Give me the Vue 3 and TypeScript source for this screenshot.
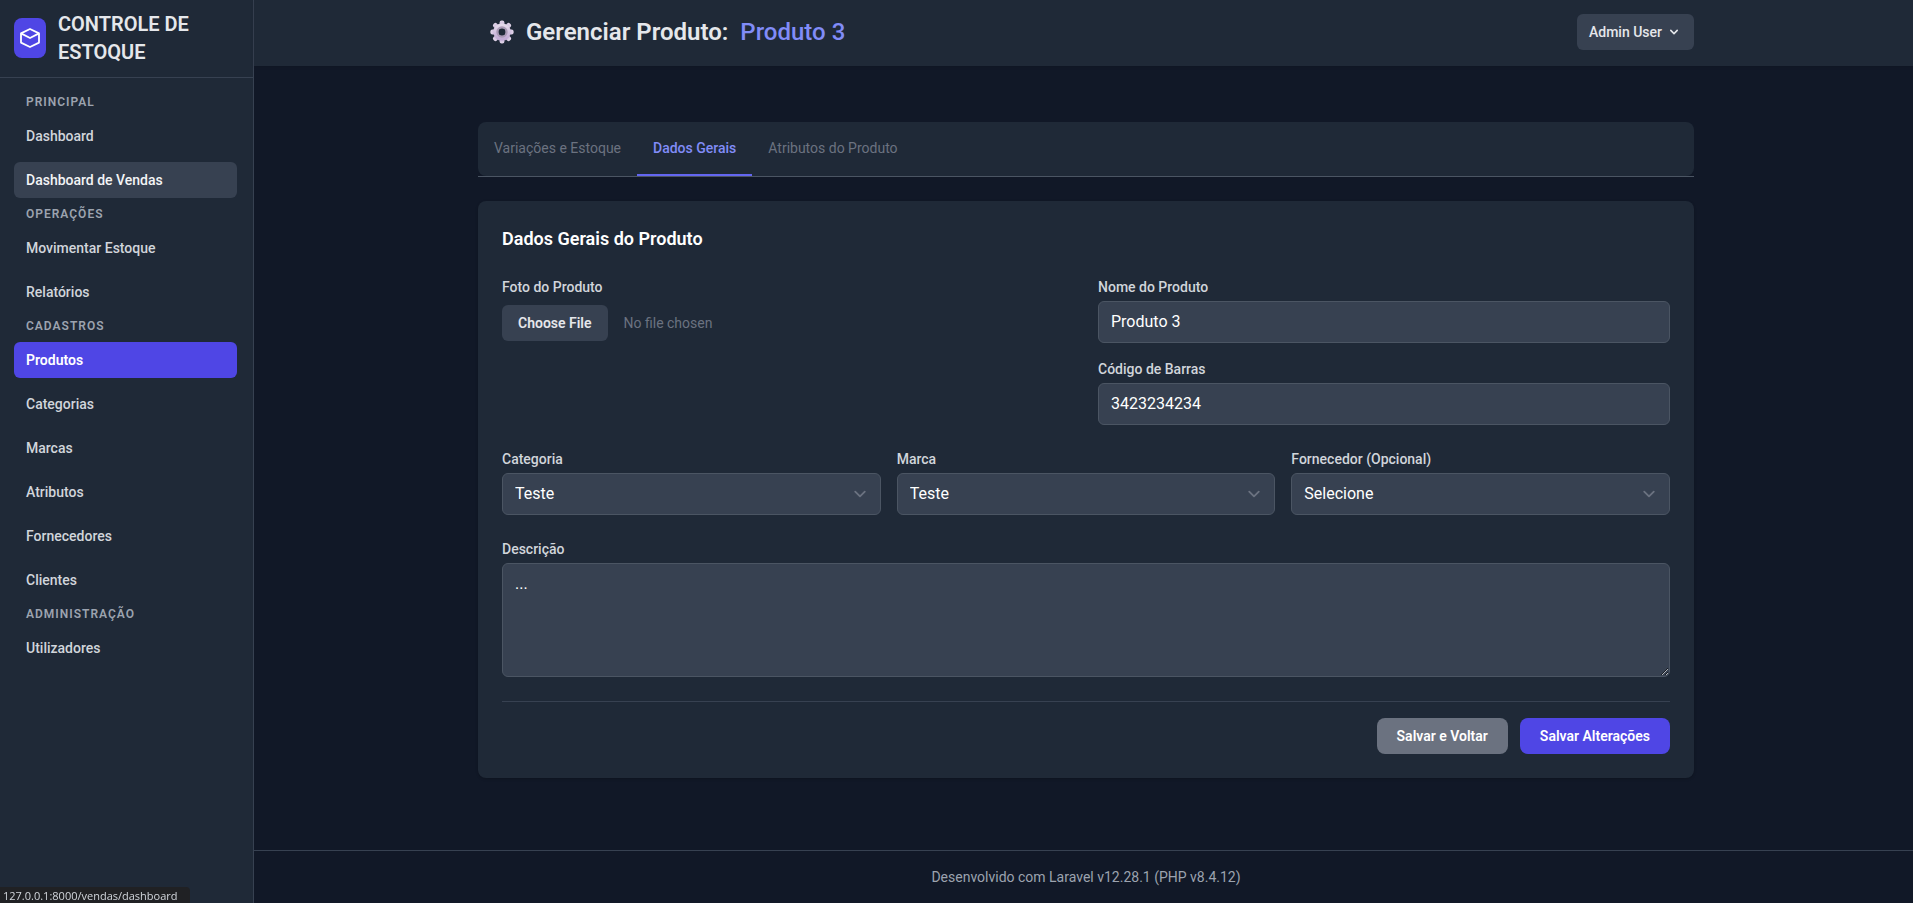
<script setup lang="ts">
import { ref } from 'vue'

interface NavItem { label: string; state?: 'active' | 'hover' }
interface NavSection { title: string; items: NavItem[] }

const sections: NavSection[] = [
  { title: 'Principal', items: [{ label: 'Dashboard' }, { label: 'Dashboard de Vendas', state: 'hover' }] },
  { title: 'Operações', items: [{ label: 'Movimentar Estoque' }, { label: 'Relatórios' }] },
  {
    title: 'Cadastros',
    items: [
      { label: 'Produtos', state: 'active' },
      { label: 'Categorias' },
      { label: 'Marcas' },
      { label: 'Atributos' },
      { label: 'Fornecedores' },
      { label: 'Clientes' },
    ],
  },
  { title: 'Administração', items: [{ label: 'Utilizadores' }] },
]

const tabs = ['Variações e Estoque', 'Dados Gerais', 'Atributos do Produto']
const activeTab = ref('Dados Gerais')

const nome = ref('Produto 3')
const codigo = ref('3423234234')
const categoria = ref('Teste')
const marca = ref('Teste')
const fornecedor = ref('Selecione')
const descricao = ref('...')

const teeth = [0, 45, 90, 135, 180, 225, 270, 315]
</script>

<template>
  <div class="layout">
    <aside class="sidebar">
      <a class="brand" href="#">
        <span class="brand-logo">
          <svg viewBox="0 0 20 20" width="20" height="20" fill="none" stroke="currentColor" stroke-width="1.8" stroke-linejoin="round" aria-hidden="true">
            <path d="M10 1L19 5.4V14.6L10 19L1 14.6V5.4Z" />
            <path d="M1 5.4L10 10L19 5.4" />
          </svg>
        </span>
        <span class="brand-name">Controle de Estoque</span>
      </a>
      <nav class="nav">
        <section v-for="section in sections" :key="section.title" class="nav-section">
          <h2 class="nav-title">{{ section.title }}</h2>
          <ul class="nav-list">
            <li v-for="item in section.items" :key="item.label">
              <a href="#" class="nav-link" :class="item.state">{{ item.label }}</a>
            </li>
          </ul>
        </section>
      </nav>
    </aside>

    <div class="page">
      <header class="topbar">
        <div class="container topbar-row">
          <h1 class="title">
            <svg viewBox="0 0 24 24" width="24" height="24" aria-hidden="true">
              <defs>
                <linearGradient id="gearFill" x1="0" y1="0" x2="0" y2="1">
                  <stop offset="0" stop-color="#e3d8ea" />
                  <stop offset="1" stop-color="#c3acd6" />
                </linearGradient>
              </defs>
              <g fill="url(#gearFill)">
                <rect v-for="angle in teeth" :key="angle" x="9.6" y="0.4" width="4.8" height="6" rx="2" :transform="`rotate(${angle} 12 12)`" />
              </g>
              <circle cx="12" cy="12" r="6.2" fill="none" stroke="url(#gearFill)" stroke-width="5" />
              <circle cx="12" cy="12" r="4.7" fill="none" stroke="#a999b5" stroke-width="2" />
            </svg>
            <span>Gerenciar Produto:</span>
            <span class="accent">Produto 3</span>
          </h1>
          <button type="button" class="user-button">
            Admin User
            <svg viewBox="0 0 20 20" width="16" height="16" fill="currentColor" aria-hidden="true">
              <path fill-rule="evenodd" clip-rule="evenodd" d="M5.293 7.293a1 1 0 011.414 0L10 10.586l3.293-3.293a1 1 0 111.414 1.414l-4 4a1 1 0 01-1.414 0l-4-4a1 1 0 010-1.414z" />
            </svg>
          </button>
        </div>
      </header>

      <main class="container content">
        <div class="tabs-wrap">
          <nav class="tabs">
            <button
              v-for="tab in tabs"
              :key="tab"
              type="button"
              class="tab"
              :class="{ current: tab === activeTab }"
              @click="activeTab = tab"
            >{{ tab }}</button>
          </nav>
        </div>

        <form class="card" @submit.prevent>
          <h3 class="card-title">Dados Gerais do Produto</h3>

          <div class="row two">
            <div class="field file-field">
              <label for="foto">Foto do Produto</label>
              <input id="foto" type="file" class="file" />
            </div>
            <div class="stack">
              <div class="field">
                <label for="nome">Nome do Produto</label>
                <input id="nome" v-model="nome" type="text" class="control" />
              </div>
              <div class="field">
                <label for="codigo">Código de Barras</label>
                <input id="codigo" v-model="codigo" type="text" class="control" />
              </div>
            </div>
          </div>

          <div class="row three">
            <div class="field">
              <label for="categoria">Categoria</label>
              <select id="categoria" v-model="categoria" class="control select"><option>Teste</option></select>
            </div>
            <div class="field">
              <label for="marca">Marca</label>
              <select id="marca" v-model="marca" class="control select"><option>Teste</option></select>
            </div>
            <div class="field">
              <label for="fornecedor">Fornecedor (Opcional)</label>
              <select id="fornecedor" v-model="fornecedor" class="control select"><option>Selecione</option></select>
            </div>
          </div>

          <div class="row field">
            <label for="descricao">Descrição</label>
            <textarea id="descricao" v-model="descricao" rows="4" class="control area"></textarea>
          </div>

          <div class="actions">
            <button type="submit" class="btn secondary">Salvar e Voltar</button>
            <button type="submit" class="btn primary">Salvar Alterações</button>
          </div>
        </form>
      </main>

      <footer class="footer">
        <p class="container footer-text">Desenvolvido com Laravel v12.28.1 (PHP v8.4.12)</p>
      </footer>
    </div>

    <div class="status">127.0.0.1:8000/vendas/dashboard</div>
  </div>
</template>

<style>
body {
  background: #111827;
}
</style>

<style scoped>
.layout,
.layout * {
  box-sizing: border-box;
}
.layout {
  display: flex;
  min-height: 100vh;
  background: #111827;
  color: #d1d5db;
  font-family: Roboto, "Liberation Sans", sans-serif;
  font-size: 14px;
  line-height: 20px;
}
h1, h2, h3, p, ul {
  margin: 0;
  padding: 0;
}
button, input, select, textarea {
  font-family: inherit;
}

.sidebar {
  flex: 0 0 254px;
  background: #1f2937;
  border-right: 1px solid #374151;
}
.brand {
  display: flex;
  align-items: center;
  gap: 12px;
  padding: 10px 14px 11px;
  border-bottom: 1px solid #374151;
  color: #e5e7eb;
  text-decoration: none;
}
.brand-logo {
  display: flex;
  align-items: center;
  justify-content: center;
  width: 32px;
  height: 40px;
  flex: none;
  border-radius: 8px;
  background: #4f46e5;
  color: #fff;
}
.brand-name {
  max-width: 160px;
  font-size: 20px;
  font-weight: 600;
  line-height: 28px;
  text-transform: uppercase;
}
.nav {
  display: flex;
  flex-direction: column;
  gap: 8px;
  padding: 16px 16px 16px 14px;
}
.nav-title {
  margin-bottom: 8px;
  padding: 0 12px;
  color: #9ca3af;
  font-size: 12px;
  font-weight: 600;
  line-height: 16px;
  letter-spacing: 1px;
  text-transform: uppercase;
}
.nav-list {
  display: flex;
  flex-direction: column;
  gap: 8px;
  list-style: none;
}
.nav-link {
  display: block;
  padding: 8px 12px;
  border-radius: 6px;
  color: #d1d5db;
  font-weight: 500;
  text-decoration: none;
}
.nav-link.hover {
  background: #374151;
  color: #f3f4f6;
}
.nav-link.active {
  background: #4f46e5;
  color: #fff;
  font-weight: 600;
}

.page {
  display: flex;
  flex: 1;
  flex-direction: column;
  min-width: 0;
}
.container {
  width: 100%;
  max-width: 1285px;
  margin: 0 auto;
  padding: 0 32px 0 37px;
}
.topbar {
  padding: 14px 0 16px;
  background: #1f2937;
  box-shadow: 0 1px 3px rgba(0, 0, 0, 0.1);
}
.topbar-row {
  display: flex;
  align-items: center;
  justify-content: space-between;
}
.title {
  display: flex;
  align-items: center;
  gap: 12px;
  padding-left: 12px;
  color: #e5e7eb;
  font-size: 24px;
  font-weight: 600;
  line-height: 32px;
}
.accent {
  color: #818cf8;
  font-weight: 500;
}
.user-button {
  display: flex;
  align-items: center;
  gap: 4px;
  height: 36px;
  padding: 0 12px;
  border: 0;
  border-radius: 6px;
  background: #374151;
  color: #e5e7eb;
  font-size: 14px;
  font-weight: 500;
}

.content {
  padding-top: 56px;
  padding-bottom: 48px;
}
.tabs-wrap {
  margin-bottom: 24px;
  border-bottom: 1px solid #4b5563;
}
.tabs {
  display: flex;
  border-radius: 8px;
  background: #1f2937;
}
.tab {
  padding: 16px;
  border: 0;
  border-bottom: 2px solid transparent;
  background: none;
  color: #6b7280;
  font-size: 14px;
  line-height: 20px;
}
.tab.current {
  border-color: #6366f1;
  color: #818cf8;
  font-weight: 500;
}

.card {
  padding: 24px;
  border-radius: 8px;
  background: #1f2937;
  box-shadow: 0 1px 3px rgba(0, 0, 0, 0.2);
}
.card-title {
  color: #fff;
  font-size: 18px;
  font-weight: 600;
  line-height: 28px;
}
.row {
  margin-top: 24px;
}
.two {
  display: grid;
  grid-template-columns: 1fr 1fr;
  gap: 24px;
}
.three {
  display: grid;
  grid-template-columns: 1fr 1fr 1fr;
  gap: 16px;
}
.stack {
  display: flex;
  flex-direction: column;
  gap: 16px;
}
.field {
  display: flex;
  flex-direction: column;
  gap: 4px;
  min-width: 0;
}
.file-field {
  gap: 8px;
}
.field label {
  font-weight: 500;
}
.control {
  width: 100%;
  min-height: 42px;
  margin: 0;
  padding: 8px 12px;
  border: 1px solid #4b5563;
  border-radius: 6px;
  background-color: #374151;
  color: #fff;
  font-size: 16px;
  line-height: 24px;
}
.select {
  appearance: none;
  padding-right: 40px;
  background-image: url("data:image/svg+xml,%3Csvg xmlns='http://www.w3.org/2000/svg' fill='none' viewBox='0 0 20 20'%3E%3Cpath stroke='%236b7280' stroke-linecap='round' stroke-linejoin='round' stroke-width='1.5' d='M6 8l4 4 4-4'/%3E%3C/svg%3E");
  background-repeat: no-repeat;
  background-position: right 8px center;
  background-size: 24px 24px;
}
.area {
  display: block;
  min-height: 114px;
  resize: vertical;
}
.file {
  width: 100%;
  color: #6b7280;
  font-size: 14px;
  line-height: 20px;
}
.file::file-selector-button {
  margin-right: 16px;
  padding: 8px 16px;
  border: 0;
  border-radius: 6px;
  background: #374151;
  color: #e5e7eb;
  font-family: inherit;
  font-size: 14px;
  font-weight: 600;
  line-height: 20px;
}
.actions {
  display: flex;
  justify-content: flex-end;
  gap: 12px;
  margin-top: 24px;
  padding-top: 16px;
  border-top: 1px solid #374151;
}
.btn {
  padding: 8px 20px;
  border: 0;
  border-radius: 8px;
  color: #fff;
  font-size: 14px;
  font-weight: 600;
  line-height: 20px;
}
.secondary {
  background: #6b7280;
}
.primary {
  background: #4f46e5;
}

.footer {
  margin-top: auto;
  padding: 16px 0;
  border-top: 1px solid #374151;
}
.footer-text {
  color: #9ca3af;
  text-align: center;
}
.status {
  position: fixed;
  bottom: 0;
  left: 0;
  padding: 2px 12px 0 3px;
  border-top-right-radius: 4px;
  background: #202124;
  color: #d1d5db;
  font-family: "Open Sans", "Noto Sans", sans-serif;
  font-size: 11px;
  line-height: 14px;
}
</style>
